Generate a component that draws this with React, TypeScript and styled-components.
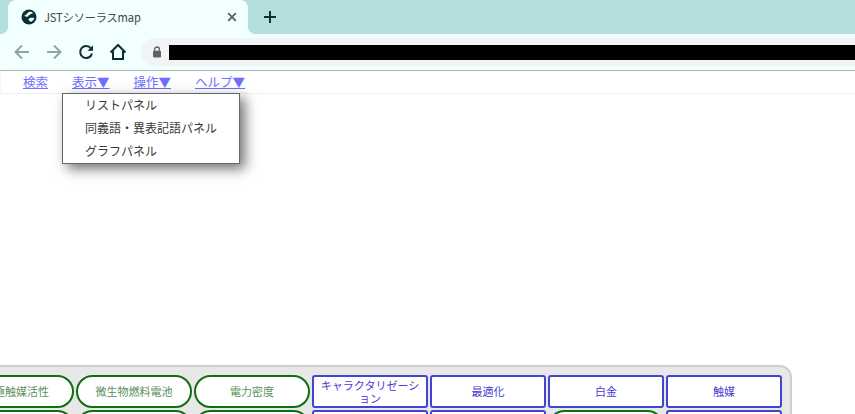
import React from "react";
import styled, { createGlobalStyle } from "styled-components";

const GlobalStyle = createGlobalStyle`
  html, body {
    margin: 0;
    padding: 0;
    background: #fff;
    overflow: hidden;
    font-family: "Noto Sans CJK JP", "Noto Sans", sans-serif;
  }
`;

const Page = styled.div`
  height: 100vh;
  display: flex;
  flex-direction: column;
  overflow: hidden;
`;

const TabStrip = styled.div`
  flex: 0 0 34px;
  background: #b3dfdc;
  display: flex;
  align-items: flex-end;
  padding-left: 8px;
`;

const Tab = styled.div`
  position: relative;
  width: 240px;
  height: 34px;
  box-sizing: border-box;
  background: #f1fffe;
  border-radius: 8px 8px 0 0;
  display: flex;
  align-items: center;
  padding: 0 10px 0 13px;
  gap: 7px;

  &::before,
  &::after {
    content: "";
    position: absolute;
    bottom: 0;
    width: 8px;
    height: 8px;
  }
  &::before {
    left: -8px;
    background: radial-gradient(circle at 0 0, transparent 8px, #f1fffe 8.5px);
  }
  &::after {
    right: -8px;
    background: radial-gradient(circle at 100% 0, transparent 8px, #f1fffe 8.5px);
  }
`;

const TabTitle = styled.span`
  flex: 1;
  font-size: 11.2px;
  letter-spacing: -0.15px;
  color: #3c4a4a;
  white-space: nowrap;
`;

const NewTab = styled.div`
  width: 16px;
  height: 16px;
  margin-left: 14px;
  margin-bottom: 9px;
  display: flex;
`;

const Toolbar = styled.div`
  flex: 0 0 36px;
  box-sizing: border-box;
  background: #f1fffe;
  display: flex;
  align-items: center;
  padding-left: 6px;
`;

const NavButton = styled.div`
  width: 32px;
  height: 20px;
  display: flex;
  align-items: center;
  justify-content: center;
`;

const Omnibox = styled.div`
  flex: 1;
  height: 28px;
  margin-left: 7px;
  background: #f1f3f4;
  border-radius: 14px 0 0 14px;
  display: flex;
  align-items: center;
  padding-left: 11px;
  gap: 7px;
`;

const Redacted = styled.div`
  flex: 1;
  height: 15px;
  background: #000;
`;

const Divider = styled.div`
  flex: 0 0 1px;
  background: #a9b5b8;
`;

const MenuBar = styled.nav`
  flex: 0 0 23px;
  box-sizing: border-box;
  display: flex;
  align-items: center;
  gap: 24px;
  padding-left: 22px;
  background: #fff;
  border-bottom: 1px solid #f0f0f0;
  border-left: 1px solid #f4f4f4;
  position: relative;
`;

const MenuItem = styled.div`
  position: relative;
  display: flex;
`;

const MenuLink = styled.a`
  font-size: 12.5px;
  line-height: 16px;
  color: #6f6fff;
  text-decoration: underline;
  white-space: nowrap;
`;

const Dropdown = styled.div`
  position: absolute;
  top: 19px;
  left: -10px;
  width: 178px;
  box-sizing: border-box;
  background: #fff;
  border: 1px solid #666;
  box-shadow: 5px 5px 12px rgba(0, 0, 0, 0.55);
  z-index: 5;
`;

const DropdownItem = styled.div`
  height: 23px;
  line-height: 22px;
  padding-left: 22px;
  font-size: 12px;
  color: #3a3a3a;
  white-space: nowrap;
`;

const Canvas = styled.main`
  flex: 0 0 271px;
  background: #fff;
`;

const WordPanel = styled.section`
  flex: 0 0 auto;
  width: 844px;
  margin-left: -52px;
  box-sizing: border-box;
  background: #e8e8e8;
  border: 2px solid #cfcfcf;
  border-radius: 0 12px 0 0;
  padding: 8px;
  display: grid;
  grid-template-columns: repeat(7, 116px);
  grid-auto-rows: 33px;
  gap: 2px;
`;

const WordCell = styled.button<{ $kind: "term" | "topic" }>`
  box-sizing: border-box;
  margin: 0;
  padding: 0 4px;
  background: #fff;
  font-family: inherit;
  font-size: 11px;
  line-height: 13px;
  line-break: anywhere;
  text-align: center;
  border: 2px solid ${(p) => (p.$kind === "term" ? "#0f6e0f" : "#4444d0")};
  border-radius: ${(p) => (p.$kind === "term" ? "17px" : "3px")};
  color: ${(p) => (p.$kind === "term" ? "#5c8f5c" : "#4a3ad4")};
`;

const Globe = () => (
  <svg width="16" height="16" viewBox="0 0 16 16">
    <circle cx="8" cy="8" r="7.5" fill="#0c2f33" />
    <path
      d="M3.2 6.6c1.6-.2 2.4-1.6 3.6-2.8.8-.8 2.4-1.2 3.8-.9l1.6 1.4c-1 .4-2.4.5-3 1.3-.8 1-2.2 1.2-2.4 2.2-1.1.2-2.6-.2-3.6-1.2zM7.4 10.2c1.4-1.3 3.7-1.7 5.9-1.1-.3 1.5-1.6 3.1-3 3.6-1.2-.1-2.4-1.3-2.9-2.5z"
      fill="#f1fffe"
    />
  </svg>
);

const CloseIcon = () => (
  <svg width="12" height="12" viewBox="0 0 12 12" stroke="#4f6464" strokeWidth="1.8" fill="none">
    <path d="M2.2 2.2l7.600 7.600M9.800 2.200l-7.600 7.600" />
  </svg>
);

const PlusIcon = () => (
  <svg width="16" height="16" viewBox="0 0 16 16" stroke="#0c2f33" strokeWidth="2" fill="none">
    <path d="M8 2v12M2 8h12" />
  </svg>
);

const BackIcon = () => (
  <svg width="16" height="16" viewBox="0 0 16 16" stroke="#8fa6a4" strokeWidth="2" fill="none">
    <path d="M15 8H2M8 1.500L1.500 8 8 14.500" />
  </svg>
);

const ForwardIcon = () => (
  <svg width="16" height="16" viewBox="0 0 16 16" stroke="#8fa6a4" strokeWidth="2" fill="none">
    <path d="M1 8h13M8 1.500L14.500 8 8 14.500" />
  </svg>
);

const ReloadIcon = () => (
  <svg width="16" height="16" viewBox="0 0 16 16" fill="none">
    <path d="M13 4.500A6 6 0 1 0 14 9.500" stroke="#0c2f33" strokeWidth="2" />
    <path d="M9.500 6.800H15V1.300z" fill="#0c2f33" />
  </svg>
);

const HomeIcon = () => (
  <svg width="18" height="18" viewBox="0 0 18 18" stroke="#0c2f33" strokeWidth="2" fill="none">
    <path d="M1.500 9.500L9 2l7.500 7.500M4 8v8h10V8" />
  </svg>
);

const LockIcon = () => (
  <svg width="10" height="12" viewBox="0 0 10 12">
    <path d="M2.600 5V3.400a2.400 2.400 0 0 1 4.800 0V5" stroke="#5f6368" strokeWidth="1.300" fill="none" />
    <rect x="1" y="4.800" width="8" height="6.700" rx="1" fill="#5f6368" />
  </svg>
);

const menus = ["検索", "表示▼", "操作▼", "ヘルプ▼"];
const panels = ["リストパネル", "同義語・異表記語パネル", "グラフパネル"];

const words: { label: string; kind: "term" | "topic" }[] = [
  { label: "電極触媒活性", kind: "term" },
  { label: "微生物燃料電池", kind: "term" },
  { label: "電力密度", kind: "term" },
  { label: "キャラクタリゼーション", kind: "topic" },
  { label: "最適化", kind: "topic" },
  { label: "白金", kind: "topic" },
  { label: "触媒", kind: "topic" },
  { label: "", kind: "term" },
  { label: "", kind: "term" },
  { label: "", kind: "term" },
  { label: "", kind: "topic" },
  { label: "", kind: "topic" },
  { label: "", kind: "term" },
  { label: "", kind: "topic" },
];

const App: React.FC = () => (
  <>
    <GlobalStyle />
    <Page>
      <TabStrip>
        <Tab>
          <Globe />
          <TabTitle>JSTシソーラスmap</TabTitle>
          <CloseIcon />
        </Tab>
        <NewTab>
          <PlusIcon />
        </NewTab>
      </TabStrip>
      <Toolbar>
        <NavButton><BackIcon /></NavButton>
        <NavButton><ForwardIcon /></NavButton>
        <NavButton><ReloadIcon /></NavButton>
        <NavButton><HomeIcon /></NavButton>
        <Omnibox>
          <LockIcon />
          <Redacted />
        </Omnibox>
      </Toolbar>
      <Divider />
      <MenuBar>
        {menus.map((m) => (
          <MenuItem key={m}>
            <MenuLink>{m}</MenuLink>
            {m === "表示▼" && (
              <Dropdown>
                {panels.map((p) => (
                  <DropdownItem key={p}>{p}</DropdownItem>
                ))}
              </Dropdown>
            )}
          </MenuItem>
        ))}
      </MenuBar>
      <Canvas />
      <WordPanel>
        {words.map((w, i) => (
          <WordCell key={i} $kind={w.kind}>
            {w.label}
          </WordCell>
        ))}
      </WordPanel>
    </Page>
  </>
);

export default App;
